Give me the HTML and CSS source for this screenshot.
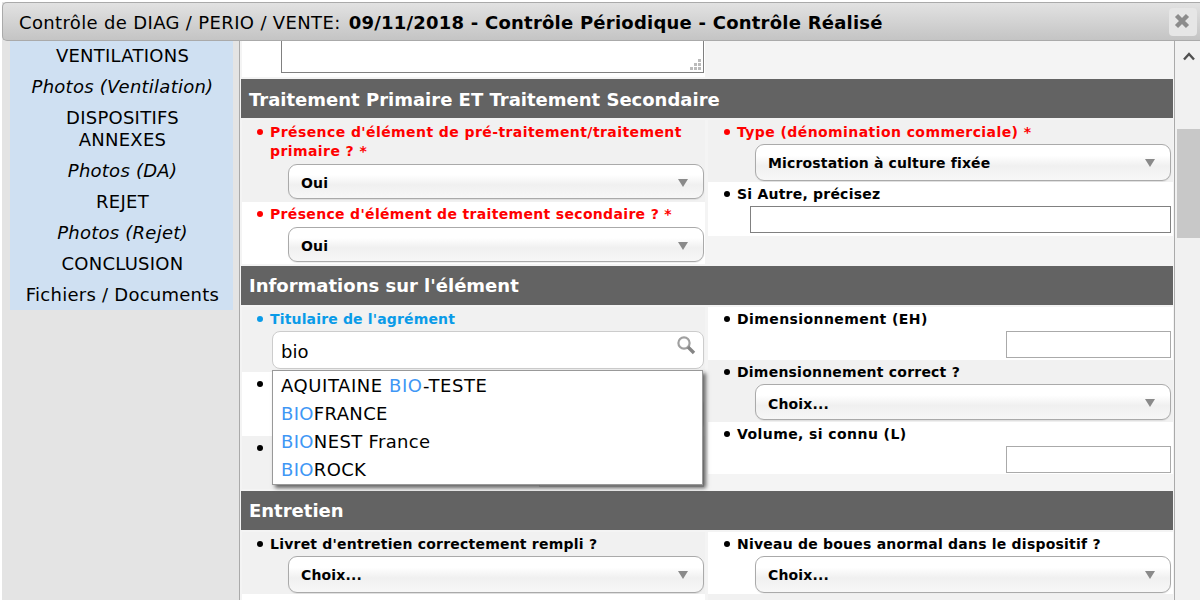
FILE: index.html
```html
<!DOCTYPE html>
<html lang="fr">
<head>
	<meta charset="UTF-8">
	<title>Contrôle de DIAG</title>
	<link rel="stylesheet" href="styles.css">
</head>
<body>
	<div class="dialog">
		<header class="titlebar">
			<h1>Contrôle de DIAG / PERIO / VENTE: <b>09/11/2018 - Contrôle Périodique - Contrôle Réalisé</b></h1>
			<a class="close" href="#">
				<svg width="16" height="16" viewBox="0 0 16 16"><path d="M2.5 2.5 L13.5 13.5 M13.5 2.5 L2.5 13.5" stroke="#8c8c8c" stroke-width="4.4"/></svg>
			</a>
		</header>
		<div class="body">
			<nav class="sidebar">
				<ul>
					<li>VENTILATIONS</li>
					<li class="photos">Photos (Ventilation)</li>
					<li>DISPOSITIFS ANNEXES</li>
					<li class="photos">Photos (DA)</li>
					<li>REJET</li>
					<li class="photos">Photos (Rejet)</li>
					<li>CONCLUSION</li>
					<li>Fichiers / Documents</li>
				</ul>
			</nav>
			<main class="form">
				<div class="top-row">
					<div class="textarea">
						<svg class="grip" width="11" height="11" viewBox="0 0 11 11"><path d="M8 0h3v3H8z M4 4h3v3H4z M8 4h3v3H8z M0 8h3v3H0z M4 8h3v3H4z M8 8h3v3H8z" fill="#bbb"/></svg>
					</div>
				</div>

				<h2>Traitement Primaire ET Traitement Secondaire</h2>
				<div class="columns">
					<div class="col">
						<div class="field grey h82">
							<label class="req">Présence d'élément de pré-traitement/traitement primaire ? *</label>
							<div class="select s35 gap4"><span>Oui</span><i class="arrow"></i></div>
						</div>
						<div class="field h62">
							<label class="req snug">Présence d'élément de traitement secondaire ? *</label>
							<div class="select s35 gap4"><span>Oui</span><i class="arrow"></i></div>
						</div>
					</div>
					<div class="col">
						<div class="field grey h62">
							<label class="req">Type (dénomination commerciale) *</label>
							<div class="select s37"><span>Microstation à culture fixée</span><i class="arrow"></i></div>
						</div>
						<div class="field h54">
							<label class="tight">Si Autre, précisez</label>
							<div class="text wide"></div>
						</div>
					</div>
				</div>

				<h2 class="up">Informations sur l'élément</h2>
				<div class="columns">
					<div class="col">
						<div class="field grey h65">
							<label class="link">Titulaire de l'agrément</label>
							<div class="search">bio
								<svg width="20" height="20" viewBox="0 0 20 20"><circle cx="8" cy="8" r="5.6" fill="none" stroke="#a0a0a0" stroke-width="2.2"/><path d="M12 12 L18 18" stroke="#858585" stroke-width="3.4"/></svg>
							</div>
						</div>
						<div class="field h64">
							<label></label>
							<div class="select"></div>
						</div>
						<div class="field grey h53">
							<label></label>
							<div class="text"></div>
						</div>
					</div>
					<div class="col">
						<div class="field h53">
							<label>Dimensionnement (EH)</label>
							<div class="text"></div>
						</div>
						<div class="field grey h62">
							<label class="tight">Dimensionnement correct ?</label>
							<div class="select"><span>Choix...</span><i class="arrow"></i></div>
						</div>
						<div class="field h52">
							<label>Volume, si connu (L)</label>
							<div class="text"></div>
						</div>
					</div>
				</div>

				<h2 class="up">Entretien</h2>
				<div class="columns">
					<div class="col">
						<div class="field grey h62">
							<label class="tight">Livret d'entretien correctement rempli ?</label>
							<div class="select s37"><span>Choix...</span><i class="arrow"></i></div>
						</div>
						<div class="field h62"><label></label></div>
					</div>
					<div class="col">
						<div class="field h62">
							<label class="tight">Niveau de boues anormal dans le dispositif ?</label>
							<div class="select s37"><span>Choix...</span><i class="arrow"></i></div>
						</div>
						<div class="field grey h62"><label></label></div>
					</div>
				</div>

				<ul class="suggest">
					<li class="wider">AQUITAINE <em>BIO</em>-TESTE</li>
					<li><em>BIO</em>FRANCE</li>
					<li><em>BIO</em>NEST France</li>
					<li><em>BIO</em>ROCK</li>
				</ul>
			</main>
			<div class="scrollbar">
				<svg width="14" height="10" viewBox="0 0 14 10"><path d="M2 8.5 L7 3 L12 8.5" fill="none" stroke="#505050" stroke-width="2.4"/></svg>
				<div class="thumb"></div>
			</div>
		</div>
	</div>
</body>
</html>
```
FILE: styles.css
```css
html, body {
	margin:0;
	padding:0;
	height:100%;
	overflow:hidden;
	background:#fff;
}

body {
	font-family:"DejaVu Sans",Verdana,sans-serif;
	font-size:14px;
	color:#000;
}

.dialog {
	display:flex;
	flex-direction:column;
	height:598px;
	margin:2px 0 0 2px;
	background:#e4e4e4;
}

.titlebar {
	display:flex;
	align-items:center;
	justify-content:space-between;
	flex:none;
	height:37px;
	padding:0 3px 0 16px;
	border:1px solid #aaa;
	border-right:0;
	border-radius:5px 0 0 5px;
	background:linear-gradient(#e2e2e2,#c4c4c4);
}

.titlebar h1 {
	margin:0;
	padding-top:1px;
	font-size:18px;
	font-weight:normal;
	letter-spacing:.35px;
	white-space:nowrap;
}

.titlebar b {
	margin-left:2px;
	letter-spacing:.23px;
}

.close {
	display:flex;
	align-items:center;
	justify-content:center;
	width:28px;
	height:28px;
	border-radius:4px;
	background:#e6e6e6;
}

.close svg {
	margin:-2px 2px 0 0;
}

.body {
	display:flex;
	flex:1;
	min-height:0;
}

.sidebar {
	flex:none;
	width:223px;
	padding:0 6px 0 8px;
}

.sidebar ul {
	margin:0;
	padding:0;
	list-style:none;
	background:#cfe0f2;
	text-align:center;
	font-size:18px;
	letter-spacing:.25px;
}

.sidebar li {
	padding:4px 9px 5px 11px;
	line-height:22px;
}

.sidebar li:last-child {
	padding-bottom:4px;
}

.sidebar .photos {
	font-style:italic;
}

.form {
	position:relative;
	flex:none;
	width:932px;
	padding:0 1px;
	border-left:1px solid #aaa;
	border-right:1px solid #aaa;
	background:#f4f4f4;
	overflow:hidden;
}

.top-row {
	box-sizing:border-box;
	width:463px;
	height:36px;
	margin:0 0 2px 1px;
	padding-left:39px;
	background:#fff;
}

.textarea {
	position:relative;
	box-sizing:border-box;
	width:423px;
	height:32px;
	border:1px solid #808080;
	border-top:0;
	background:#fff;
}

.grip {
	position:absolute;
	right:2px;
	bottom:2px;
}

h2 {
	margin:0;
	padding:0 8px;
	height:39px;
	line-height:41px;
	background:#636363;
	color:#fff;
	font-size:18px;
	font-weight:bold;
}

h2.up {
	line-height:39px;
}

.columns {
	display:flex;
	gap:3px;
	margin:2px 0;
	padding-left:1px;
}

.col {
	flex:none;
	width:463px;
}

.col + .col {
	width:465px;
}

.field {
	position:relative;
	box-sizing:border-box;
	padding:3px 1px 0 28px;
	background:#fff;
}

.col + .col .field {
	padding:3px 2px 0 29px;
}

.field.grey {
	background:#f1f1f1;
}

.h82 { height:82px; }
.h65 { height:65px; }
.h64 { height:64px; }
.h62 { height:62px; }
.h54 { height:54px; }
.h53 { height:53px; }
.h52 { height:52px; }

label {
	display:block;
	min-height:19px;
	margin-bottom:2px;
	font-weight:bold;
	font-size:14px;
	line-height:19px;
	letter-spacing:.42px;
}

label.tight {
	letter-spacing:.22px;
}

label.snug {
	letter-spacing:.33px;
}

label::before {
	content:"";
	position:absolute;
	left:15px;
	top:9px;
	width:6px;
	height:6px;
	border-radius:50%;
	background:currentColor;
}

.col + .col label::before {
	left:16px;
}

label:empty::before {
	background:#000;
}

.req {
	color:#f00;
}

label.link {
	color:#0a9be8;
	letter-spacing:.16px;
}

.select {
	display:flex;
	align-items:center;
	justify-content:space-between;
	box-sizing:border-box;
	height:36px;
	margin-left:18px;
	padding:1px 15px 0 12px;
	border:1px solid #aaa;
	border-radius:9px;
	background:linear-gradient(#fff 30%,#f0f0f0 60%,#f7f7f7);
	box-shadow:0 1px 1px rgba(0,0,0,.08);
	font-weight:bold;
	letter-spacing:.15px;
}

.select span {
	margin-top:2px;
}

.s35 { height:35px; padding-top:2px; }
.s37 { height:37px; }

.s35 span,
.s37 span {
	margin-top:0;
}

.gap4 {
	margin-top:3px;
}

.arrow {
	width:0;
	height:0;
	border-left:5px solid transparent;
	border-right:5px solid transparent;
	border-top:8px solid #8a8a8a;
}

.text {
	box-sizing:border-box;
	width:165px;
	height:27px;
	margin-left:auto;
	border:1px solid #aaa;
	background:#fff;
}

.text.wide {
	width:421px;
	border-color:#808080;
}

.search {
	position:relative;
	box-sizing:border-box;
	height:38px;
	margin-left:2px;
	padding-left:8px;
	border:1px solid #ccc;
	border-radius:8px;
	background:#fff;
	font-size:18px;
	line-height:40px;
}

.search svg {
	position:absolute;
	right:7px;
	top:3px;
}

.suggest {
	position:absolute;
	left:32px;
	top:329px;
	width:429px;
	margin:0;
	padding:1px 0 0;
	list-style:none;
	border:1px solid #999;
	background:#fff;
	box-shadow:3px 3px 4px #666;
	font-size:18px;
	letter-spacing:.34px;
}

.suggest li {
	height:28px;
	padding-left:8px;
	line-height:28px;
}

.suggest .wider {
	letter-spacing:.56px;
}

.suggest em {
	font-style:normal;
	color:#3f97f5;
}

.scrollbar {
	flex:1;
	padding:10px 0 0 2px;
	background:#f1f1f1;
}

.scrollbar svg {
	display:block;
	margin:0 auto;
}

.thumb {
	height:109px;
	margin-top:68px;
	background:#c8c8c8;
}
```
